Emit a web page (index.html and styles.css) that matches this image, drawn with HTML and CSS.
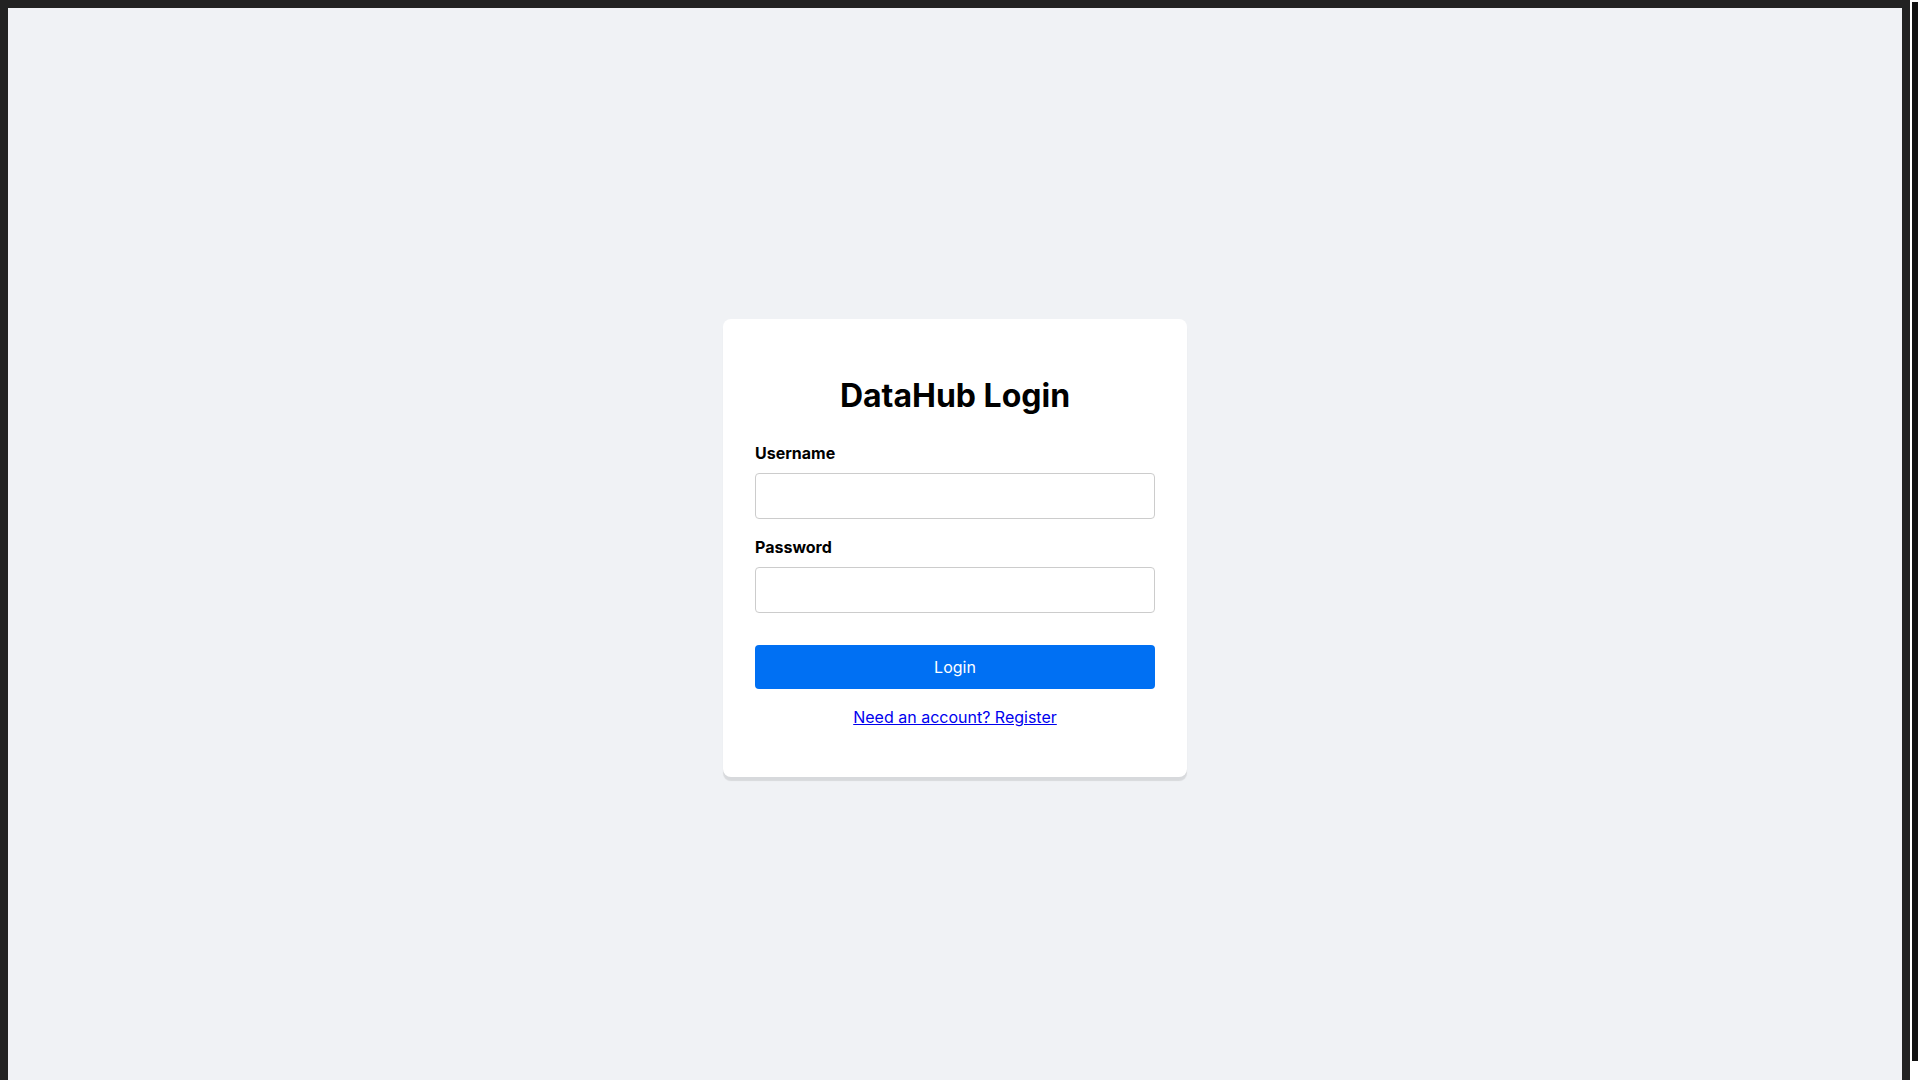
FILE: index.html
```html
<!DOCTYPE html>
<html lang="en">
<head>
<meta charset="utf-8">
<title>DataHub Login</title>
<link rel="stylesheet" href="styles.css">
</head>
<body>
  <div class="card">
    <h1 class="title">DataHub Login</h1>
    <form class="form" onsubmit="return false;">
      <div class="group">
        <label class="label" for="username">Username</label>
        <input class="input" id="username" type="text">
      </div>
      <div class="group">
        <label class="label" for="password">Password</label>
        <input class="input" id="password" type="password">
      </div>
      <button class="button" type="submit">Login</button>
    </form>
    <p class="switch"><a class="link" href="#">Need an account? Register</a></p>
  </div>
</body>
</html>
```

FILE: styles.css
```css
html {
  padding-right: 10px;
  background:
    linear-gradient(#111111, #111111) right 2px top 2px / 6px 1059px no-repeat fixed,
    linear-gradient(#ffffff, #ffffff) right top / 10px 100% no-repeat fixed,
    #222222;
}
body {
  margin: 8px;
  min-height: 100vh;
  background: #f0f2f5;
  font-family: Inter, "Noto Sans", sans-serif;
  line-height: 1.5;
  color: #000;
  display: flex;
  align-items: center;
  justify-content: center;
}
.card {
  width: 400px;
  padding: 32px;
  background: #ffffff;
  border-radius: 8px;
  box-shadow: 0 4px 1px rgba(0, 0, 0, 0.1);
}
.title {
  font-size: 32px;
  font-weight: 700;
  text-align: center;
  margin: 21.44px 0;
}
.form {
  margin: 0;
}
.group {
  margin-bottom: 16px;
}
.label {
  display: block;
  font-weight: 700;
  font-size: 16px;
  margin-bottom: 8px;
}
.input {
  display: block;
  box-sizing: border-box;
  width: 100%;
  padding: 12px;
  font-family: inherit;
  font-size: 16px;
  line-height: normal;
  border: 1px solid #cccccc;
  border-radius: 4px;
  background: #fff;
}
.button {
  display: block;
  width: 100%;
  margin-top: 32px;
  padding: 12px;
  font-family: inherit;
  font-size: 16px;
  line-height: normal;
  color: #ffffff;
  background: #0070f3;
  border: none;
  border-radius: 4px;
  cursor: pointer;
}
.switch {
  text-align: center;
  margin: 16px 0;
  font-size: 16px;
}
.link {
  color: #0000ee;
  text-decoration: underline;
}
```
